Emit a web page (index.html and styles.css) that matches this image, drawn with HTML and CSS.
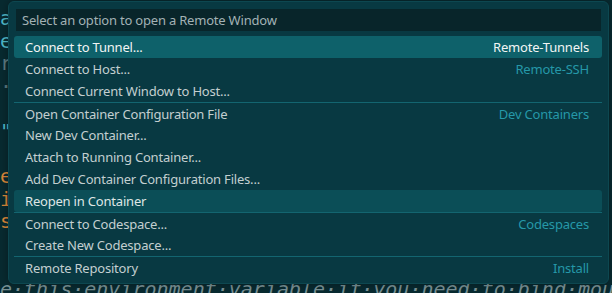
FILE: index.html
```html
<!DOCTYPE html>
<html lang="en">

<head>
    <meta charset="UTF-8">
    <meta name="viewport" content="width=device-width, initial-scale=1.0">
    <title>Remote Window</title>
    <link rel="stylesheet" href="styles.css">
</head>

<body>
    <!-- 编辑器背景，只留面板左边露出来的字 -->
    <div class="editor">
        <p class="line"><span class="key">ai</span></p>
        <p class="line"><span class="key">er</span></p>
        <p class="line"><span class="dim">r/</span></p>
        <p class="line"><span class="dim">&middot;</span></p>
        <p class="line"><span class="dim">  </span></p>
        <p class="line"><span class="key">"</span></p>
        <p class="line"><span class="dim">  </span></p>
        <p class="line"><span class="str">e</span></p>
        <p class="line"><span class="str">i</span></p>
        <p class="line"><span class="str">s</span></p>
        <p class="line"></p>
        <p class="line"></p>
        <p class="line"><span class="comment">e&middot;this&middot;environment&middot;variable&middot;if&middot;you&middot;need&middot;to&middot;bind&middot;mou</span></p>
    </div>

    <!-- 快速选择面板 -->
    <div class="picker">
        <div class="search">Select an option to open a Remote Window</div>
        <ul class="options">
            <li class="option active"><span class="label">Connect to Tunnel...</span><span class="desc">Remote-Tunnels</span></li>
            <li class="option"><span class="label">Connect to Host...</span><span class="desc">Remote-SSH</span></li>
            <li class="option"><span class="label">Connect Current Window to Host...</span></li>
            <li class="option sep"><span class="label">Open Container Configuration File</span><span class="desc">Dev Containers</span></li>
            <li class="option"><span class="label">New Dev Container...</span></li>
            <li class="option"><span class="label">Attach to Running Container...</span></li>
            <li class="option"><span class="label">Add Dev Container Configuration Files...</span></li>
            <li class="option hover"><span class="label">Reopen in Container</span></li>
            <li class="option sep"><span class="label">Connect to Codespace...</span><span class="desc">Codespaces</span></li>
            <li class="option"><span class="label">Create New Codespace...</span></li>
            <li class="option sep"><span class="label">Remote Repository</span><span class="desc">Install</span></li>
        </ul>
    </div>
</body>

</html>
```

FILE: styles.css
```css
* {
    padding: 0;
    margin: 0;
    box-sizing: border-box;
}

body {
    width: 612px;
    height: 293px;
    overflow: hidden;
    background: #082a30;
    position: relative;
    font-family: "Noto Sans", "Open Sans", sans-serif;
}

.editor {
    padding-top: 7px;
    font-family: "DejaVu Sans Mono", "Liberation Mono", monospace;
    font-size: 20px;
    line-height: 22.6px;
}

.editor .line {
    height: 22.6px;
    white-space: pre;
}

.editor .key {
    color: #4fb8c8;
}

.editor .dim {
    color: #5c7a80;
}

.editor .str {
    color: #d9873a;
}

.editor .comment {
    color: #7a9296;
    font-style: italic;
}

/* 面板盖在编辑器上面 */
.picker {
    position: absolute;
    left: 8px;
    top: 1px;
    width: 601px;
    height: 283px;
    background: #083942;
    border: 1px solid #0d4750;
    border-radius: 6px;
    box-shadow: 0 0 8px rgba(0, 0, 0, 0.35);
    padding: 7px 6px 5px 5px;
}

.search {
    height: 22px;
    margin: 0 1px 5px 2px;
    background: #08252a;
    color: #a3b2b5;
    font-size: 13px;
    letter-spacing: -0.2px;
    line-height: 22px;
    padding-left: 6px;
}

.options {
    list-style: none;
}

.option {
    display: flex;
    justify-content: space-between;
    align-items: center;
    height: 22px;
    padding: 0 13px 0 11px;
    font-size: 13px;
    letter-spacing: -0.2px;
    color: #c3cfd0;
    border-radius: 3px;
}

.option.sep {
    border-top: 1px solid #136570;
    border-radius: 0;
}

.option.active {
    background: #0e616a;
    color: #f2f5f5;
}

.option.hover {
    background: #0b4e57;
    color: #dfe6e6;
}

.option .desc {
    color: #2598a8;
}

.option.active .desc {
    color: #f2f5f5;
}
```
